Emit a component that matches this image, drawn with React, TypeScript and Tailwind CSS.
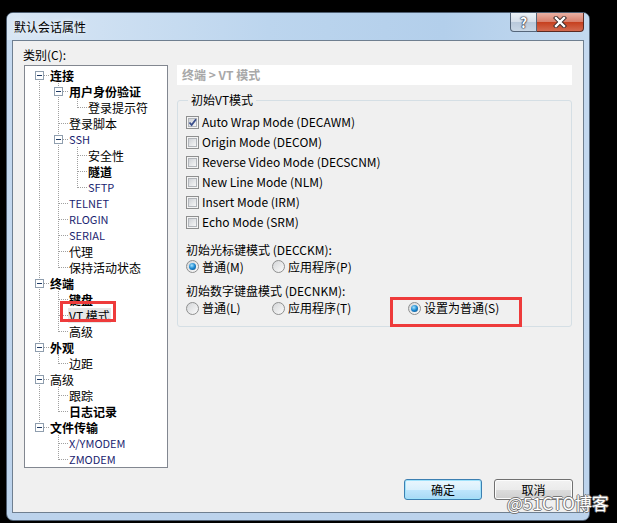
import React from "react";

type N = { t: string; b?: boolean; lat?: boolean; sel?: boolean; c?: N[] };

const TREE: N[] = [
  {
    t: "连接",
    b: true,
    c: [
      { t: "用户身份验证", b: true, c: [{ t: "登录提示符" }] },
      { t: "登录脚本" },
      { t: "SSH", lat: true, c: [{ t: "安全性" }, { t: "隧道", b: true }, { t: "SFTP", lat: true }] },
      { t: "TELNET", lat: true },
      { t: "RLOGIN", lat: true },
      { t: "SERIAL", lat: true },
      { t: "代理" },
      { t: "保持活动状态" },
    ],
  },
  { t: "终端", b: true, c: [{ t: "键盘", b: true }, { t: "VT 模式", sel: true }, { t: "高级" }] },
  { t: "外观", b: true, c: [{ t: "边距" }] },
  { t: "高级", c: [{ t: "跟踪" }, { t: "日志记录", b: true }] },
  { t: "文件传输", b: true, c: [{ t: "X/YMODEM", lat: true }, { t: "ZMODEM", lat: true }] },
];

type Row = { n: N; depth: number; last: boolean; trail: boolean[]; first: boolean };

function flatten(nodes: N[], depth: number, trail: boolean[], out: Row[]): Row[] {
  nodes.forEach((n, i) => {
    const last = i === nodes.length - 1;
    out.push({ n, depth, last, trail, first: depth === 0 && i === 0 });
    if (n.c) flatten(n.c, depth + 1, [...trail, last], out);
  });
  return out;
}

const DOT = { stroke: "#a0a0a0", strokeDasharray: "1 1" };

function Cell({ pass, up, down, branch, box }: { pass?: boolean; up?: boolean; down?: boolean; branch?: boolean; box?: boolean }) {
  return (
    <svg width="19" height="16" className="shrink-0" shapeRendering="crispEdges">
      {pass && <line x1="9.5" y1="0" x2="9.5" y2="16" {...DOT} />}
      {up && <line x1="9.5" y1="0" x2="9.5" y2="9" {...DOT} />}
      {down && <line x1="9.5" y1="8" x2="9.5" y2="16" {...DOT} />}
      {branch && <line x1="10" y1="8.5" x2="19" y2="8.5" {...DOT} />}
      {box && (
        <>
          <rect x="5.5" y="4.5" width="8" height="8" fill="#fff" stroke="#8f9eae" />
          <line x1="7" y1="8.5" x2="12" y2="8.5" stroke="#1e3a64" />
        </>
      )}
    </svg>
  );
}

function Tree() {
  const rows = flatten(TREE, 0, [], []);
  return (
    <div className="h-[403px] w-[144px] shrink-0 border border-[#828790] bg-white pl-[5px] pt-[1px]">
      {rows.map((r, i) => (
        <div key={i} className="flex h-[16px] items-center">
          {r.trail.map((wasLast, d) => (
            <Cell key={d} pass={!wasLast} />
          ))}
          <Cell up={!r.first} down={!r.last} branch box={!!r.n.c} />
          <span
            className={`whitespace-nowrap px-[1px] leading-[15px] ${r.n.b ? "font-bold" : ""} ${
              r.n.lat ? "text-[11px] text-[#1a2470]" : "text-[12px]"
            } ${r.n.sel ? "bg-[#e6e6e6]" : ""}`}
          >
            {r.n.t}
          </span>
        </div>
      ))}
    </div>
  );
}

function Check({ on, label }: { on?: boolean; label: string }) {
  return (
    <div className="flex h-[20px] items-center gap-[3px]">
      <div className="flex h-[13px] w-[13px] items-center justify-center border border-[#8e8f8f] bg-[#f4f4f4]">
        <div className="h-[9px] w-[9px] border border-[#b1b5ba] bg-[linear-gradient(135deg,#cfd2d6,#f6f6f6)]">
          {on && (
            <svg width="9" height="9" viewBox="0 0 9 9" className="block -ml-[1px] -mt-[1px]">
              <path d="M1.5 4.5 L3.6 7 L8 1.2" fill="none" stroke="#3b4f8c" strokeWidth="1.8" />
            </svg>
          )}
        </div>
      </div>
      <span>{label}</span>
    </div>
  );
}

function Radio({ on, label, w }: { on?: boolean; label: string; w?: string }) {
  return (
    <div className={`flex items-center gap-[3px] ${w ?? ""}`}>
      <div className="flex h-[13px] w-[13px] items-center justify-center rounded-full border border-[#8e8f8f] bg-[linear-gradient(135deg,#d4d6d8,#fbfbfb)]">
        {on && (
          <div className="h-[7px] w-[7px] rounded-full bg-[radial-gradient(circle_at_40%_35%,#a6e4ff_0%,#1a86cf_50%,#0b4577_100%)]" />
        )}
      </div>
      <span>{label}</span>
    </div>
  );
}

export default function App() {
  return (
    <div className="relative h-[523px] w-[617px] overflow-hidden bg-black pl-[6px] pt-[12px] font-['Noto_Sans_CJK_SC','Noto_Sans',sans-serif] text-[12px] text-black">
      <div className="flex h-[509px] w-[584px] flex-col rounded-[7px] border border-[#4f5f72] bg-[linear-gradient(to_bottom,#c6daf0,#bcd3ec)]">
        {/* title bar */}
        <div className="flex h-[27px] shrink-0 items-center rounded-t-[6px] bg-[linear-gradient(to_right,#d8e6f4,#bcd5ee_45%,#b3cfeb_75%,#c3d9ef)] pr-[5px]">
          <span className="pl-[7px] text-[12px] text-black [text-shadow:0_0_6px_#fff]">默认会话属性</span>
          <div className="ml-auto flex self-start">
            <div className="flex h-[19px] w-[27px] items-center justify-center rounded-bl-[4px] border border-t-0 border-[#55667a] bg-[linear-gradient(to_bottom,#eef3f8,#d5dfea_50%,#b9c9db_51%,#c9d7e6)] text-[14px] font-bold leading-none text-white [text-shadow:0_0_1px_#223,0_0_1px_#223,0_0_2px_#223]">
              ?
            </div>
            <div className="flex h-[19px] w-[47px] items-center justify-center rounded-br-[4px] border border-l-0 border-t-0 border-[#5a2a22] bg-[linear-gradient(to_bottom,#eab1a4,#d9806c_48%,#c6401f_52%,#d36a4f)]">
              <svg width="14" height="12" viewBox="0 0 14 12">
                <path d="M3 2 L11 10 M11 2 L3 10" stroke="#3a2a2a" strokeWidth="4.2" strokeLinecap="square" />
                <path d="M3 2 L11 10 M11 2 L3 10" stroke="#fff" strokeWidth="2.4" strokeLinecap="square" />
              </svg>
            </div>
          </div>
        </div>

        {/* client area */}
        <div className="mx-[5px] flex h-[473px] flex-col border border-[#6f7f90] bg-[#f0f0f0]">
          <div className="h-[18px] pl-[10px] pt-[6px] leading-[16px] box-content">类别(C):</div>
          <div className="flex pl-[11px]">
            <Tree />
            <div className="ml-[9px] w-[395px]">
              <div className="h-[20px] bg-white pl-[5px] font-bold leading-[20px] text-[#a8a8a8]">终端 &gt; VT 模式</div>
              <fieldset className="mt-[7px] rounded-[3px] border border-[#d5dfe5] px-[8px] pb-[9px]">
                <legend className="ml-[2px] px-[3px] leading-[16px]">初始VT模式</legend>
                <div className="pt-[4px]">
                  <Check on label="Auto Wrap Mode (DECAWM)" />
                  <Check label="Origin Mode (DECOM)" />
                  <Check label="Reverse Video Mode (DECSCNM)" />
                  <Check label="New Line Mode (NLM)" />
                  <Check label="Insert Mode (IRM)" />
                  <Check label="Echo Mode (SRM)" />
                </div>
                <div className="mt-[9px] h-[17px] leading-[17px]">初始光标键模式 (DECCKM):</div>
                <div className="flex h-[17px] items-center">
                  <Radio on label="普通(M)" w="w-[86px]" />
                  <Radio label="应用程序(P)" />
                </div>
                <div className="mt-[7px] h-[17px] leading-[17px]">初始数字键盘模式 (DECNKM):</div>
                <div className="flex h-[18px] items-center">
                  <Radio label="普通(L)" w="w-[86px]" />
                  <Radio label="应用程序(T)" w="w-[136px]" />
                  <Radio on label="设置为普通(S)" />
                </div>
              </fieldset>
            </div>
          </div>
          <div className="mt-[11px] flex h-[21px] justify-end gap-[12px] pr-[10px]">
            <div className="flex w-[78px] items-center justify-center rounded-[3px] border border-[#3c7fb1] bg-[linear-gradient(to_bottom,#eaf6fd,#d9f0fc_50%,#bee6fd_51%,#a7d9f5)] shadow-[inset_0_0_0_1px_#9fe2fb]">
              确定
            </div>
            <div className="flex w-[79px] items-center justify-center rounded-[3px] border border-[#707070] bg-[linear-gradient(to_bottom,#f2f2f2,#ebebeb_50%,#dddddd_51%,#cfcfcf)] shadow-[inset_0_0_0_1px_#fcfcfc]">
              取消
            </div>
          </div>
        </div>
      </div>

      {/* annotations */}
      <div className="absolute left-[60px] top-[301px] h-[21px] w-[56px] border-[3px] border-[#ee3b3b]" />
      <div className="absolute left-[390px] top-[297px] h-[30px] w-[132px] border-[3px] border-[#ee3b3b]" />
      <div className="absolute left-[507px] top-[492px] text-[17px] leading-[22px] text-white [text-shadow:1px_0_0_#777,-1px_0_0_#777,0_1px_0_#777,0_-1px_0_#777]">
        @51CTO博客
      </div>
    </div>
  );
}
